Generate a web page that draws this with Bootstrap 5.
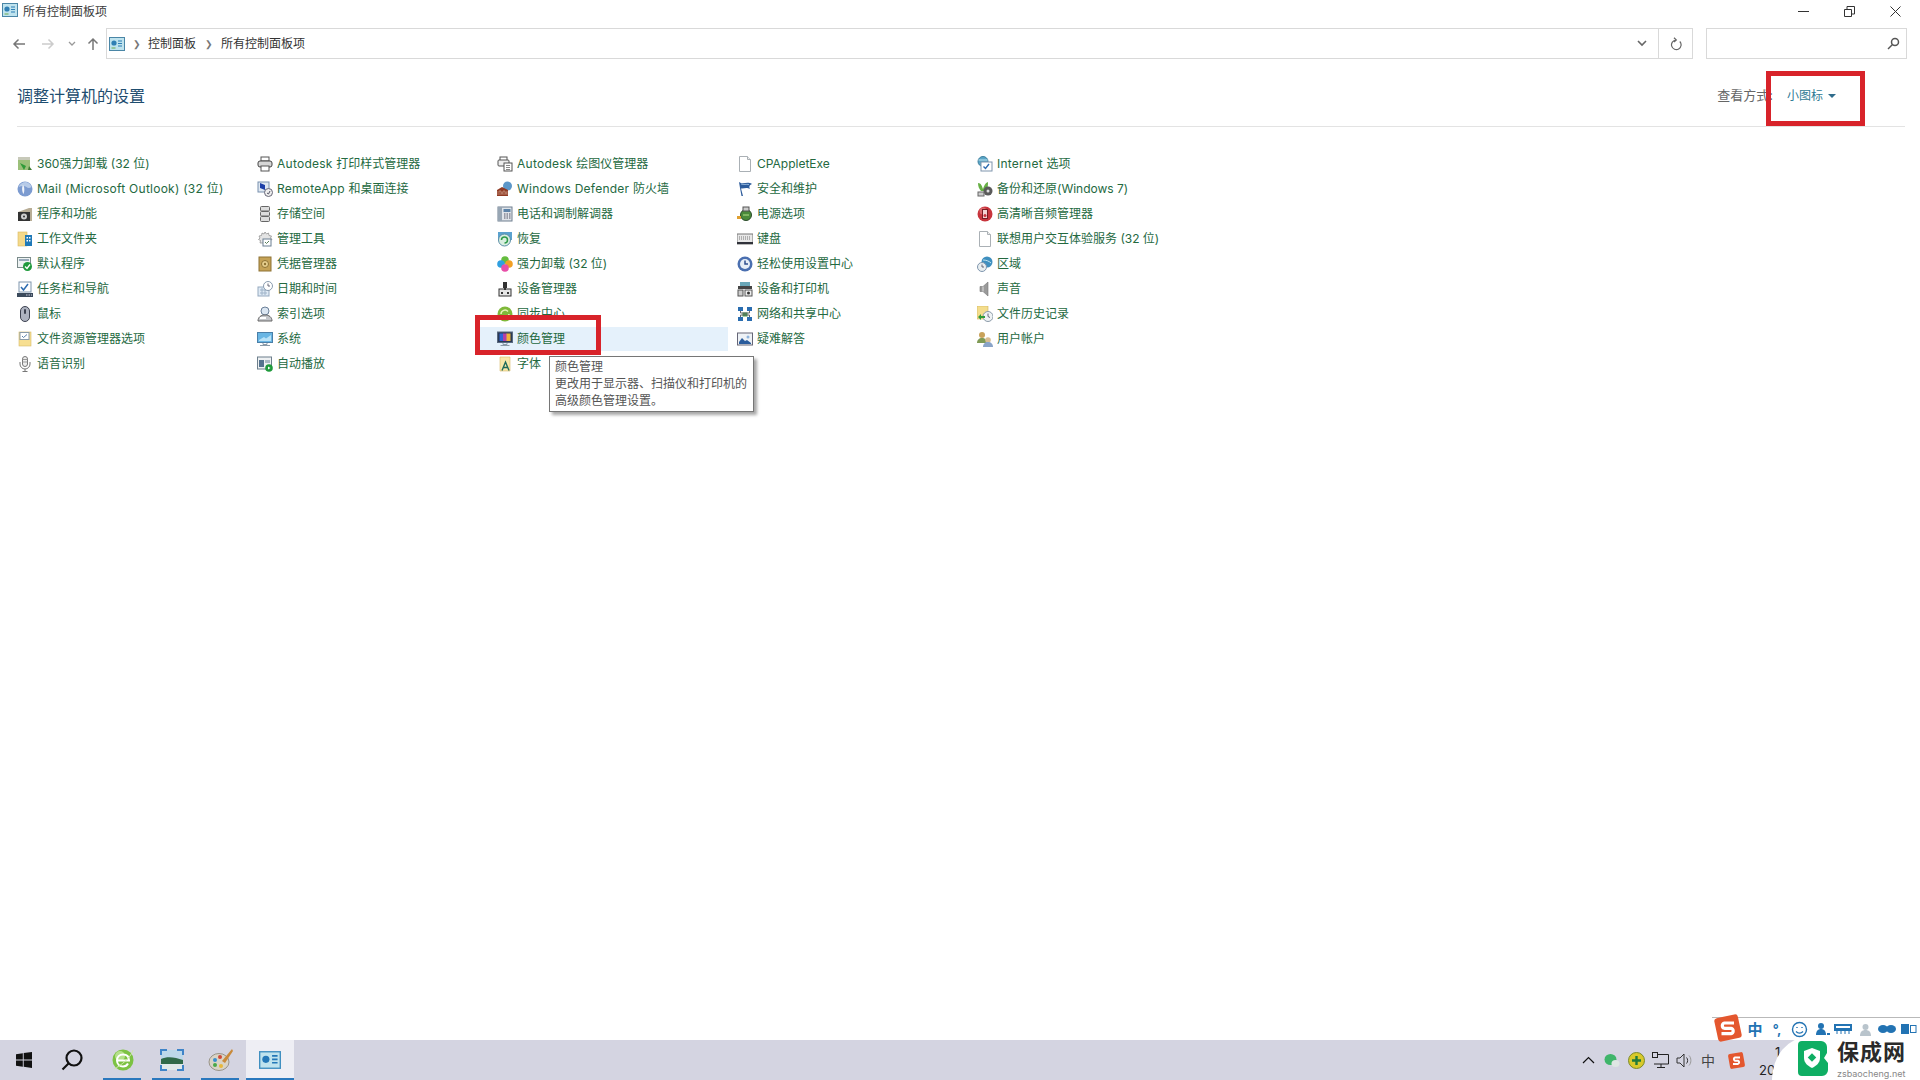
<!DOCTYPE html>
<html lang="zh-CN">
<head>
    <meta charset="UTF-8">
    <meta name="viewport" content="width=device-width, initial-scale=1.0">
    <title>所有控制面板项</title>
    <link href="https://cdn.jsdelivr.net/npm/bootstrap@5.3.3/dist/css/bootstrap.min.css" rel="stylesheet">
    <style>
        html, body { height: 100%; overflow: hidden; }
        body {
            background: #fff;
            font-family: "Inter", "Noto Sans CJK SC", sans-serif;
            font-size: 12px;
            color: #333;
        }
        .win-app { height: 1080px; position: relative; }
        .title-bar { height: 28px; padding-left: 2px; color: #3c3c3c; }
        .title-bar .title-text { margin-left: 5px; line-height: 23px; }
        .title-ico { margin-top: 2px; }
        .win-btn { width: 46px; height: 22px; }
        .win-btns { padding-right: 2px; }
        .addr-row { height: 31px; }
        .nav-btns { width: 106px; padding-left: 5px; }
        .nav-cell { height: 31px; }
        .nav-back { width: 28px; }
        .nav-fwd { width: 30px; }
        .nav-drop { width: 18px; }
        .nav-up { width: 24px; }
        .addr-box {
            width: 1587px;
            border: 1px solid #d9d9d9;
            color: #333;
            padding-left: 2px;
        }
        .addr-sep { width: 23px; color: #777; text-align: center; font-size: 9px; }
        .addr-sep.is-last { width: 25px; }
        .addr-end { width: 34px; border-left: 1px solid #d9d9d9; height: 100%; }
        .addr-drop { width: 32px; }
        .search-box {
            width: 201px;
            margin-left: 13px;
            border: 1px solid #d9d9d9;
            padding-right: 6px;
        }
        .head-row {
            height: 68px;
            margin: 0 15px 0 17px;
            border-bottom: 1px solid #e3e3e3;
        }
        .head-title { font-size: 16px; color: #1e4d6f; line-height: 1; margin-top: 29px; }
        .view-by { color: #666; font-size: 13px; line-height: 1; margin-top: 30px; margin-right: 69px; }
        .view-by .view-val { color: #2f7a94; font-size: 12px; margin-left: 14px; }
        .view-caret {
            display: inline-block;
            border-left: 4px solid transparent;
            border-right: 4px solid transparent;
            border-top: 4px solid #2f6c8c;
            margin-left: 5px;
            vertical-align: 2px;
        }
        .item-grid {
            display: grid;
            grid-auto-flow: column;
            grid-template-rows: repeat(9, 25px);
            grid-auto-columns: 240px;
            margin-top: 25px;
            padding-left: 8px;
        }
        .cp-item {
            display: flex;
            align-items: center;
            padding-left: 9px;
            gap: 4px;
            color: #24693f;
            white-space: nowrap;
            height: 24px;
            width: 240px;
        }
        .cp-item svg { flex: none; width: 16px; height: 16px; }
        .cp-item.is-hover { background: #e5f1fb; margin-left: -8px; padding-left: 17px; width: 248px; }
        .wide-latin { letter-spacing: .25px; }
        .red-mark { position: absolute; border: 5px solid #d8232a; }
        .mark-view { left: 1766px; top: 71px; width: 99px; height: 55px; }
        .mark-color { left: 475px; top: 315px; width: 126px; height: 40px; }
        .tip-box {
            position: absolute;
            left: 549px;
            top: 356px;
            width: 205px;
            height: 56px;
            background: #fff;
            border: 1px solid #767676;
            box-shadow: 3px 3px 3px rgba(0, 0, 0, .35);
            padding: 1px 5px;
            line-height: 17px;
            color: #555;
        }
        .task-bar {
            position: absolute;
            left: 0;
            right: 0;
            bottom: 0;
            height: 40px;
            background: #d4d4e1;
        }
        .task-cell { width: 48px; height: 40px; }
        .task-pin { width: 49px; height: 40px; position: relative; }
        .task-pin::after {
            content: "";
            position: absolute;
            left: 5px;
            right: 6px;
            bottom: 0;
            height: 2px;
            background: #2a78bd;
        }
        .task-pin.is-first { margin-left: 2px; }
        .task-pin.is-active { background: #eeeef4; width: 48px; margin-left: 1px; }
        .task-pin.is-active::after { left: 0; right: 0; }
        .tray-cell { width: 24px; height: 40px; }
        .tray-zh { color: #444; font-size: 14px; }
        .tray-clock { width: 164px; padding-left: 3px; font-size: 13px; line-height: 18px; color: #222; padding-top: 3px; }
        .tray-clock .clock-top { padding-left: 16px; }
        .ime-bar {
            position: absolute;
            left: 1712px;
            top: 1017px;
            width: 208px;
            height: 23px;
            background: #fff;
            border-top: 1px solid #b9b9b9;
            padding-left: 32px;
        }
        .ime-slot { width: 22px; flex: none; }
        .ime-logo { position: absolute; left: 1714px; top: 1014px; }
        .ime-zh { font-size: 15px; font-weight: 700; color: #2273b3; line-height: 1; }
        .ime-dots { color: #2273b3; font-size: 13px; font-weight: 700; line-height: 1; }
        .brand-mark {
            position: absolute;
            left: 1772px;
            top: 1037px;
            width: 148px;
            height: 43px;
            background: #fff;
            border-top-left-radius: 36px 43px;
            padding-left: 26px;
            gap: 8px;
        }
        .brand-name { font-size: 22px; font-weight: 700; color: #2a2a2a; line-height: 31px; letter-spacing: 1px; }
        .brand-url { font-size: 9px; color: #888; line-height: 12px; }
    </style>
</head>
<body>

<!-- icon sprites, 16x16 -->
<svg width="0" height="0" class="position-absolute">
    <symbol id="i-cpl" viewBox="0 0 16 16"><rect x=".5" y="1.500" width="15" height="13" fill="#bfe3ee" stroke="#4a86a6"/><circle cx="5" cy="7" r="2.600" fill="#2f7fb4"/><path d="M9 5h4M9 7.500h4M9 10h4" stroke="#2f7fb4" stroke-width="1.200"/><path d="M2.500 12h4" stroke="#6aa84f"/></symbol>
    <symbol id="i-360" viewBox="0 0 16 16"><rect x="1" y="1" width="12" height="13" fill="#9cc07a"/><rect x="1" y="1" width="12" height="3" fill="#c7c9b9"/><path d="M3 7l6 3-2 4z" fill="#2f9a38"/><path d="M12 10l3 4h-4z" fill="#3f7d33"/></symbol>
    <symbol id="i-mail" viewBox="0 0 16 16"><circle cx="8" cy="8" r="7.500" fill="#7c9bd0"/><path d="M1.500 6C3 2.500 6 1 9 1c3 .5 5 3 5.500 5-2 1.500-4 1-5 0-2-1.500-5-1-8 0z" fill="#b7cbe8"/><path d="M6 4c1.500 1.500 1.800 6 .5 9-1.500-2-2-6.500-.5-9z" fill="#f2f5fa"/></symbol>
    <symbol id="i-prog" viewBox="0 0 16 16"><path d="M1 6l11-4h3v13H1z" fill="#b8ad96"/><rect x="1" y="6" width="12" height="9" fill="#333"/><circle cx="7" cy="10.500" r="3" fill="#cfcfcf"/><circle cx="7" cy="10.500" r="1" fill="#333"/></symbol>
    <symbol id="i-work" viewBox="0 0 16 16"><rect x="1" y="1" width="9" height="14" fill="#f4d98a" stroke="#d9b85e" stroke-width=".6"/><rect x="8" y="4" width="7" height="11" fill="#1f79b8"/><path d="M9.500 6h1.500v1.500H9.500zM12 6h1.500v1.500H12zM9.500 9h1.500v1.500H9.500zM12 9h1.500v1.500H12z" fill="#fff"/></symbol>
    <symbol id="i-def" viewBox="0 0 16 16"><rect x=".5" y="1.500" width="13" height="10" fill="#eef3f3" stroke="#7a8a8a"/><rect x="2" y="3" width="10" height="2" fill="#9ab"/><circle cx="10.500" cy="10.500" r="4.500" fill="#1f9a3c"/><path d="M8 10.500l2 2 3-4" fill="none" stroke="#fff" stroke-width="1.300"/></symbol>
    <symbol id="i-task" viewBox="0 0 16 16"><rect x="2" y="1" width="12" height="10" fill="#fff" stroke="#7f95ad"/><path d="M4 6l2.500 3L11 3" fill="none" stroke="#2d6cb0" stroke-width="1.500"/><rect y="12" width="16" height="4" fill="#3b4a5c"/><path d="M9 14h1.500M11.500 14H13M14 14h1" stroke="#ccd" /></symbol>
    <symbol id="i-mouse" viewBox="0 0 16 16"><rect x="3.500" y=".5" width="9" height="15" rx="4.500" fill="#aeb3c0" stroke="#3d4250"/><rect x="7" y="3" width="2" height="5" rx="1" fill="#3d4250"/></symbol>
    <symbol id="i-fopt" viewBox="0 0 16 16"><rect x="2" y="1" width="12" height="14" fill="#f7df92" stroke="#d6bb68" stroke-width=".6"/><rect x="3" y="1.500" width="9" height="7" fill="#fff" stroke="#8a9aa8"/><path d="M5 5l1.500 1.500L10 3.500" fill="none" stroke="#5a7fa8"/></symbol>
    <symbol id="i-mic" viewBox="0 0 16 16"><rect x="5.500" y=".5" width="5" height="10" rx="2.500" fill="#eee" stroke="#777"/><path d="M5.500 3.500h5M5.500 6h5" stroke="#999"/><path d="M3 6v2a5 5 0 0 0 10 0V6M8 13v2.500M5.500 15.500h5" fill="none" stroke="#777"/></symbol>

    <symbol id="i-print" viewBox="0 0 16 16"><rect x="4" y="1" width="8" height="4" fill="#fff" stroke="#555"/><rect x="1" y="5" width="14" height="6" rx="2" fill="#d6d6d6" stroke="#444"/><rect x="4" y="10" width="8" height="5" fill="#fff" stroke="#555"/></symbol>
    <symbol id="i-remote" viewBox="0 0 16 16"><rect x="1" y="1" width="11" height="10" fill="#dfe8f2" stroke="#7890ad"/><path d="M3 2l5 2v5l-5-2z" fill="#1d3fa8"/><circle cx="11.500" cy="11.500" r="4" fill="#eee" stroke="#667"/><path d="M10 12l1.500 1 1.500-3" fill="none" stroke="#556"/></symbol>
    <symbol id="i-store" viewBox="0 0 16 16"><g fill="#ddd" stroke="#666"><rect x="3.500" y=".5" width="9" height="4.500" rx="1"/><rect x="3.500" y="5.500" width="9" height="4.500" rx="1"/><rect x="3.500" y="10.500" width="9" height="5" rx="1"/></g></symbol>
    <symbol id="i-admin" viewBox="0 0 16 16"><path d="M8 1l1.500 2 2-1 .5 2.500 2.500.5-1 2 1.500 1.500-2 1 .5 2.500H3l.5-2.500-2-1L3 7 2 5l2.500-.5L5 2l2 1z" fill="#e4e4e4" stroke="#888" stroke-width=".7"/><rect x="6" y="8" width="8" height="7" fill="#fff" stroke="#6b7f92"/><path d="M8 11l1.500 1.500L12 10" fill="none" stroke="#5a7f5a"/></symbol>
    <symbol id="i-cred" viewBox="0 0 16 16"><rect x="2" y="1" width="12" height="14" fill="#c5a256" stroke="#8e7334"/><circle cx="8" cy="8" r="3.500" fill="#e7cf8e" stroke="#8e7334"/><circle cx="8" cy="8" r="1.200" fill="#8e7334"/></symbol>
    <symbol id="i-date" viewBox="0 0 16 16"><rect x="1" y="6" width="11" height="9" fill="#dfeaf5" stroke="#95a9bf"/><path d="M3 9h7M3 12h7M5 7v7M8 7v7" stroke="#9fb3c8"/><circle cx="11" cy="5" r="4.500" fill="#fff" stroke="#8a9cb0"/><path d="M11 2.500V5h2" fill="none" stroke="#667"/></symbol>
    <symbol id="i-index" viewBox="0 0 16 16"><circle cx="8" cy="5" r="4" fill="#dbe6f2" stroke="#6a7f98"/><path d="M1 15c0-4 3-6 7-6s7 2 7 6z" fill="#c4c6ca" stroke="#666"/><rect x="3" y="11" width="6" height="2" fill="#fff"/></symbol>
    <symbol id="i-sys" viewBox="0 0 16 16"><rect x=".5" y="1.500" width="15" height="10" fill="#69b6e4" stroke="#4a7fa8"/><path d="M2 9l5-3 2 1.500L14 4v6H2z" fill="#b9e2f7"/><path d="M6 12v1.500h4V12M3 14.500h10" stroke="#8a9aa8" fill="none"/></symbol>
    <symbol id="i-auto" viewBox="0 0 16 16"><rect x=".5" y="1" width="14" height="12" fill="#eef1f3" stroke="#6d7f8c"/><rect x="2" y="4" width="5" height="7" fill="#54728e"/><rect x="8" y="4" width="5" height="3" fill="#aab8c4"/><circle cx="12" cy="12" r="3.800" fill="#1f9a3c"/><path d="M11 10.500l2.500 1.500-2.500 1.500z" fill="#fff"/></symbol>

    <symbol id="i-plot" viewBox="0 0 16 16"><rect x="3" y="1" width="7" height="4" fill="#fff" stroke="#555"/><rect x="1" y="4" width="11" height="6" rx="1" fill="#eee" stroke="#555"/><rect x="7" y="7" width="8" height="8" fill="#fff" stroke="#555"/><path d="M9 9.500h4M9 11.500h4M9 13.500h4" stroke="#888"/></symbol>
    <symbol id="i-fire" viewBox="0 0 16 16"><circle cx="10.500" cy="5" r="4.500" fill="#5c97c9"/><path d="M0 15V9l5-3 6 3v6z" fill="#8f3a23"/><path d="M0 11h11M0 13h11M3 9v2M7 9v2M5 11v2M9 11v2" stroke="#d8b2a0" stroke-width=".6"/></symbol>
    <symbol id="i-phone" viewBox="0 0 16 16"><rect x="1" y="1" width="14" height="14" fill="#dfe4ea" stroke="#6f7f8f"/><rect x="1" y="1" width="4" height="14" fill="#98a6b4"/><rect x="6.500" y="3" width="7" height="3" fill="#5d83a8"/><path d="M7 8h1.500M9.500 8H11M12 8h1.500M7 10h1.500M9.500 10H11M12 10h1.500M7 12h1.500M9.500 12H11M12 12h1.500" stroke="#556"/></symbol>
    <symbol id="i-recover" viewBox="0 0 16 16"><rect x="1" y="1" width="14" height="8" fill="#5ba2cf"/><circle cx="7.500" cy="9" r="6" fill="#d9efe0" stroke="#5b8ea8"/><path d="M4.500 9a3 3 0 1 1 3 3" fill="none" stroke="#2f9a4a" stroke-width="1.500"/></symbol>
    <symbol id="i-flower" viewBox="0 0 16 16"><circle cx="8" cy="4" r="3.800" fill="#65bd3f"/><circle cx="4" cy="8" r="3.800" fill="#2f9fe0"/><circle cx="12" cy="8" r="3.800" fill="#f2a024"/><circle cx="8" cy="12" r="3.800" fill="#e84fa8"/></symbol>
    <symbol id="i-dev" viewBox="0 0 16 16"><rect x="6" y="1" width="4" height="6" fill="#333"/><rect x="2" y="8" width="12" height="7" fill="#e6e6e6" stroke="#333"/><rect x="7" y="6" width="2" height="3" fill="#333"/><rect x="4" y="11" width="2" height="2" fill="#333"/><rect x="10" y="11" width="2" height="2" fill="#333"/></symbol>
    <symbol id="i-sync" viewBox="0 0 16 16"><circle cx="8" cy="8" r="7.500" fill="#7fb93a"/><path d="M4 8a4 4 0 0 1 7-2.500M12 8a4 4 0 0 1-7 2.500" fill="none" stroke="#e9f3b8" stroke-width="1.500"/></symbol>
    <symbol id="i-color" viewBox="0 0 16 16"><rect x=".5" y="1" width="15" height="10.500" fill="#2b3a55" stroke="#5a6a80"/><rect x="2.500" y="2.500" width="4" height="7.500" fill="#2f65d8"/><rect x="6" y="2.500" width="4" height="7.500" fill="#b33fa8"/><rect x="9.500" y="2.500" width="4" height="7.500" fill="#f0b33a"/><path d="M6 12v1.500h4V12M3.500 14.500h9" stroke="#8a9aa8" fill="none"/></symbol>
    <symbol id="i-font" viewBox="0 0 16 16"><path d="M3 1h10v14H3z" fill="#f9e7a8" stroke="#d6bb68" stroke-width=".6"/><path d="M5 14.500L8.500 6l3.500 8.500M6.300 11.500h4.400" fill="none" stroke="#1f6a5a" stroke-width="1.400"/></symbol>

    <symbol id="i-file" viewBox="0 0 16 16"><path d="M2.500.5h8l3 3v12h-11z" fill="#fff" stroke="#aab0b5"/><path d="M10.500.5v3h3" fill="#eee" stroke="#aab0b5"/></symbol>
    <symbol id="i-flag" viewBox="0 0 16 16"><path d="M2 1c4 3 8-1 13 2-3 1-3 3-2 5-4-2-6 0-9-.5L6 15H4.500L3 7z" fill="#2d5c9c"/><path d="M4 3c3 1 5 0 8 .5" fill="none" stroke="#8fb4dc"/></symbol>
    <symbol id="i-power" viewBox="0 0 16 16"><circle cx="9" cy="9" r="5.500" fill="#4a8a3a" stroke="#2a4a2a"/><rect x="6" y="1" width="6" height="4" fill="#ccc" stroke="#555"/><path d="M0 10h4v3H0z" fill="#e0a030"/><path d="M6 9h6" stroke="#b5e08a"/></symbol>
    <symbol id="i-keys" viewBox="0 0 16 16"><rect y="3" width="16" height="10" fill="#e8e8e8" stroke="#777"/><path d="M2 6h12M2 8h12" stroke="#777" stroke-dasharray="1 1"/><rect y="11" width="16" height="2" fill="#30323a"/></symbol>
    <symbol id="i-ease" viewBox="0 0 16 16"><circle cx="8" cy="8" r="7.500" fill="#4a6fb0"/><circle cx="8" cy="8" r="5" fill="#e8eef7"/><path d="M8 4.500V8h3" fill="none" stroke="#2f4f90" stroke-width="1.500"/></symbol>
    <symbol id="i-devprn" viewBox="0 0 16 16"><rect x="3" y="1" width="10" height="4" fill="#6aa7b8"/><rect x="1" y="5" width="14" height="3" fill="#444"/><rect x="1" y="9" width="5" height="6" fill="#ccc" stroke="#555"/><rect x="8" y="9" width="7" height="6" fill="#eee" stroke="#555"/><circle cx="11.500" cy="12" r="1.500" fill="#333"/></symbol>
    <symbol id="i-net" viewBox="0 0 16 16"><rect x="1" y="1" width="5" height="4" fill="#2a6db0"/><rect x="10" y="1" width="5" height="4" fill="#2a6db0"/><rect x="5.500" y="6.500" width="5" height="4" fill="#3f9a4a"/><rect x="1" y="11" width="5" height="4" fill="#2a6db0"/><rect x="10" y="11" width="5" height="4" fill="#2a6db0"/><path d="M3.500 5v2h9V5M3.500 11V9h9v2" fill="none" stroke="#666"/></symbol>
    <symbol id="i-trouble" viewBox="0 0 16 16"><rect x=".5" y="2" width="15" height="12" fill="#eef2f6" stroke="#667"/><path d="M2 11l3-4 3 3 2-1 4 3v1H2z" fill="#2a5c9c"/><circle cx="11" cy="6" r="1.500" fill="#8fb4dc"/></symbol>

    <symbol id="i-inet" viewBox="0 0 16 16"><circle cx="6" cy="5.500" r="5" fill="#5aa6c7" stroke="#3f7f9e"/><path d="M1.500 4h9" stroke="#bfe3ee"/><rect x="4" y="6" width="11" height="9" fill="#fff" stroke="#7f95ad"/><path d="M6.500 10.500l2 2L12 8" fill="none" stroke="#2d6cb0" stroke-width="1.400"/></symbol>
    <symbol id="i-backup" viewBox="0 0 16 16"><path d="M1 2c3 0 4 3 5 6 1-3 2-6 5-7 0 3 0 6-2 9H4C2 8 1 5 1 2z" fill="#67b045"/><circle cx="11" cy="10" r="4.500" fill="#5a5a5a"/><circle cx="11" cy="10" r="1.500" fill="#ddd"/><rect x="1" y="11" width="6" height="4" fill="#ccc" stroke="#666"/></symbol>
    <symbol id="i-audio" viewBox="0 0 16 16"><circle cx="8" cy="8" r="7.500" fill="#c8343c"/><circle cx="6" cy="5" r="3.500" fill="#e98a8a" opacity=".6"/><rect x="5.500" y="3.500" width="5" height="9" fill="#f4d2d2" stroke="#7a1c22"/><circle cx="8" cy="9.500" r="1.500" fill="#c8343c"/></symbol>
    <symbol id="i-region" viewBox="0 0 16 16"><circle cx="10" cy="6" r="5.500" fill="#3f8fbf"/><path d="M6 4c3 0 6 1 8 3" stroke="#bfe3ee" fill="none"/><circle cx="5" cy="11" r="4.500" fill="#e8eef0" stroke="#7f95ad"/><path d="M5 8.500V11h2" fill="none" stroke="#667"/></symbol>
    <symbol id="i-sound" viewBox="0 0 16 16"><path d="M3 5.500h3L11 1v14L6 10.500H3z" fill="#9a9a9a" stroke="#777" stroke-width=".6"/><path d="M6 5.500v5" stroke="#ddd"/></symbol>
    <symbol id="i-hist" viewBox="0 0 16 16"><rect x="0" y="0" width="11" height="13" fill="#f4dd8c" stroke="#cdb35f" stroke-width=".6"/><circle cx="11" cy="10.500" r="5" fill="#eef2f4" stroke="#8a9aa8"/><path d="M11 7.500v3l2 1" fill="none" stroke="#667"/><path d="M1 11l3-3v2h4v2H4v2z" fill="#2f9a38"/></symbol>
    <symbol id="i-users" viewBox="0 0 16 16"><circle cx="5" cy="4" r="3" fill="#c9a25a"/><path d="M0 12c0-3 2-5 5-5s5 2 5 5z" fill="#7f9a55"/><circle cx="11" cy="9" r="2.800" fill="#d9bd92"/><path d="M6 16c0-3 2-5 5-5s5 2 5 5z" fill="#8aa4c8"/></symbol>
</svg>

<div class="win-app d-flex flex-column">

    <div class="title-bar d-flex">
        <svg class="title-ico" width="16" height="16"><use href="#i-cpl"/></svg>
        <span class="title-text">所有控制面板项</span>
        <div class="win-btns d-flex ms-auto">
            <div class="win-btn d-flex align-items-center justify-content-center">
                <svg width="11" height="11"><path d="M0 5.500h11" stroke="#333"/></svg>
            </div>
            <div class="win-btn d-flex align-items-center justify-content-center">
                <svg width="11" height="11" fill="none" stroke="#333"><path d="M.5 3.500h7v7h-7zM3 3.500V.5h7.500V8H8"/></svg>
            </div>
            <div class="win-btn d-flex align-items-center justify-content-center">
                <svg width="11" height="11" stroke="#333"><path d="M.5.5l10 10M10.500.5l-10 10"/></svg>
            </div>
        </div>
    </div>

    <div class="addr-row d-flex">
        <div class="nav-btns d-flex">
            <div class="nav-cell nav-back d-flex align-items-center justify-content-center">
                <svg width="14" height="12" fill="none" stroke="#777" stroke-width="1.500"><path d="M13 6H2M6.500 1.500L2 6l4.500 4.500"/></svg>
            </div>
            <div class="nav-cell nav-fwd d-flex align-items-center justify-content-center">
                <svg width="14" height="12" fill="none" stroke="#ccc" stroke-width="1.500"><path d="M1 6h11M7.500 1.500L12 6l-4.500 4.500"/></svg>
            </div>
            <div class="nav-cell nav-drop d-flex align-items-center justify-content-center">
                <svg width="8" height="6" fill="none" stroke="#999" stroke-width="1.300"><path d="M1 1l3 3 3-3"/></svg>
            </div>
            <div class="nav-cell nav-up d-flex align-items-center justify-content-center">
                <svg width="12" height="14" fill="none" stroke="#777" stroke-width="1.500"><path d="M6 13V2M1.500 6.500L6 2l4.500 4.500"/></svg>
            </div>
        </div>
        <div class="addr-box d-flex align-items-center">
            <svg width="16" height="16"><use href="#i-cpl"/></svg>
            <span class="addr-sep">&#10095;</span>
            <span>控制面板</span>
            <span class="addr-sep is-last">&#10095;</span>
            <span>所有控制面板项</span>
            <div class="addr-drop d-flex justify-content-center ms-auto">
                <svg width="10" height="7" fill="none" stroke="#666" stroke-width="1.600"><path d="M1 1l4 4 4-4"/></svg>
            </div>
            <div class="addr-end d-flex align-items-center justify-content-center">
                <svg width="12" height="14" fill="none" stroke="#666" stroke-width="1.200"><path d="M9.800 4.500A4.800 4.800 0 1 1 6 3M4 .8L6.300 3 4 5"/></svg>
            </div>
        </div>
        <div class="search-box d-flex align-items-center justify-content-end">
            <svg width="13" height="13" fill="none" stroke="#555" stroke-width="1.500"><circle cx="8" cy="5" r="3.500"/><path d="M5.500 7.500L1 12"/></svg>
        </div>
    </div>

    <div class="head-row d-flex justify-content-between">
        <div class="head-title">调整计算机的设置</div>
        <div class="view-by">查看方式:<span class="view-val">小图标<span class="view-caret"></span></span></div>
    </div>

    <div class="item-grid">
        <div class="cp-item"><svg><use href="#i-360"/></svg>360强力卸载 (32 位)</div>
        <div class="cp-item"><svg><use href="#i-mail"/></svg><span class="wide-latin">Mail (Microsoft Outlook) (32 位)</span></div>
        <div class="cp-item"><svg><use href="#i-prog"/></svg>程序和功能</div>
        <div class="cp-item"><svg><use href="#i-work"/></svg>工作文件夹</div>
        <div class="cp-item"><svg><use href="#i-def"/></svg>默认程序</div>
        <div class="cp-item"><svg><use href="#i-task"/></svg>任务栏和导航</div>
        <div class="cp-item"><svg><use href="#i-mouse"/></svg>鼠标</div>
        <div class="cp-item"><svg><use href="#i-fopt"/></svg>文件资源管理器选项</div>
        <div class="cp-item"><svg><use href="#i-mic"/></svg>语音识别</div>

        <div class="cp-item"><svg><use href="#i-print"/></svg><span><span class="wide-latin">Autodesk </span>打印样式管理器</span></div>
        <div class="cp-item"><svg><use href="#i-remote"/></svg><span><span class="wide-latin">RemoteApp </span>和桌面连接</span></div>
        <div class="cp-item"><svg><use href="#i-store"/></svg>存储空间</div>
        <div class="cp-item"><svg><use href="#i-admin"/></svg>管理工具</div>
        <div class="cp-item"><svg><use href="#i-cred"/></svg>凭据管理器</div>
        <div class="cp-item"><svg><use href="#i-date"/></svg>日期和时间</div>
        <div class="cp-item"><svg><use href="#i-index"/></svg>索引选项</div>
        <div class="cp-item"><svg><use href="#i-sys"/></svg>系统</div>
        <div class="cp-item"><svg><use href="#i-auto"/></svg>自动播放</div>

        <div class="cp-item"><svg><use href="#i-plot"/></svg><span><span class="wide-latin">Autodesk </span>绘图仪管理器</span></div>
        <div class="cp-item"><svg><use href="#i-fire"/></svg><span><span class="wide-latin">Windows Defender </span>防火墙</span></div>
        <div class="cp-item"><svg><use href="#i-phone"/></svg>电话和调制解调器</div>
        <div class="cp-item"><svg><use href="#i-recover"/></svg>恢复</div>
        <div class="cp-item"><svg><use href="#i-flower"/></svg>强力卸载 (32 位)</div>
        <div class="cp-item"><svg><use href="#i-dev"/></svg>设备管理器</div>
        <div class="cp-item"><svg><use href="#i-sync"/></svg>同步中心</div>
        <div class="cp-item is-hover"><svg><use href="#i-color"/></svg>颜色管理</div>
        <div class="cp-item"><svg><use href="#i-font"/></svg>字体</div>

        <div class="cp-item"><svg><use href="#i-file"/></svg>CPAppletExe</div>
        <div class="cp-item"><svg><use href="#i-flag"/></svg>安全和维护</div>
        <div class="cp-item"><svg><use href="#i-power"/></svg>电源选项</div>
        <div class="cp-item"><svg><use href="#i-keys"/></svg>键盘</div>
        <div class="cp-item"><svg><use href="#i-ease"/></svg>轻松使用设置中心</div>
        <div class="cp-item"><svg><use href="#i-devprn"/></svg>设备和打印机</div>
        <div class="cp-item"><svg><use href="#i-net"/></svg>网络和共享中心</div>
        <div class="cp-item"><svg><use href="#i-trouble"/></svg>疑难解答</div>
        <div></div>

        <div class="cp-item"><svg><use href="#i-inet"/></svg><span><span class="wide-latin">Internet </span>选项</span></div>
        <div class="cp-item"><svg><use href="#i-backup"/></svg>备份和还原(Windows 7)</div>
        <div class="cp-item"><svg><use href="#i-audio"/></svg>高清晰音频管理器</div>
        <div class="cp-item"><svg><use href="#i-file"/></svg>联想用户交互体验服务 (32 位)</div>
        <div class="cp-item"><svg><use href="#i-region"/></svg>区域</div>
        <div class="cp-item"><svg><use href="#i-sound"/></svg>声音</div>
        <div class="cp-item"><svg><use href="#i-hist"/></svg>文件历史记录</div>
        <div class="cp-item"><svg><use href="#i-users"/></svg>用户帐户</div>
    </div>

    <!-- annotations and tooltip on top of the window -->
    <div class="red-mark mark-view"></div>
    <div class="red-mark mark-color"></div>
    <div class="tip-box">颜色管理<br>更改用于显示器、扫描仪和打印机的<br>高级颜色管理设置。</div>

    <div class="task-bar d-flex">
        <div class="task-cell d-flex align-items-center justify-content-center">
            <svg width="16" height="16" fill="#111"><path d="M0 2.200l6.800-1V7.500H0zM7.700 1.100L16 0v7.500H7.700zM0 8.400h6.800v6.400l-6.800-1zM7.700 8.400H16V16l-8.300-1.200z"/></svg>
        </div>
        <div class="task-cell d-flex align-items-center justify-content-center">
            <svg width="22" height="22" fill="none" stroke="#111" stroke-width="2.200"><circle cx="13" cy="9" r="7.500"/><path d="M7.500 14.500L1.500 20.500"/></svg>
        </div>
        <div class="task-pin is-first d-flex align-items-center justify-content-center">
            <svg width="24" height="24" viewBox="0 0 24 24"><circle cx="12" cy="12" r="10.500" fill="#7cc243"/><circle cx="9" cy="8" r="5" fill="#b5e08a"/><path d="M6 12.500h12c0-4-2.500-6-6-6s-6 2.500-6 6c0 4 3 6 6 6 2 0 4-1 5-3" fill="none" stroke="#fff" stroke-width="2"/><path d="M3 21C9 18 20 10 22 2" fill="none" stroke="#cfe8a8"/></svg>
        </div>
        <div class="task-pin d-flex align-items-center justify-content-center">
            <svg width="24" height="22" viewBox="0 0 24 22"><rect x="1" y="1" width="22" height="20" fill="#bcd8ea"/><path d="M1 10c6-3 14-2 22 1v6H1z" fill="#2f6a4a"/><path d="M1 15h22v6H1z" fill="#dfe9ea"/><path d="M1 6V1h6M17 1h6v5M1 16v5h6M17 21h6v-5" fill="none" stroke="#3f84c8" stroke-width="2"/></svg>
        </div>
        <div class="task-pin d-flex align-items-center justify-content-center">
            <svg width="26" height="24" viewBox="0 0 26 24"><ellipse cx="11" cy="14" rx="10" ry="8.500" fill="#d9d4c6" stroke="#9a9488"/><circle cx="7" cy="12" r="2" fill="#3a8fd0"/><circle cx="12" cy="9" r="2" fill="#d04a3a"/><circle cx="7" cy="17" r="2" fill="#4aa84a"/><circle cx="13" cy="18" r="2" fill="#e8b83a"/><path d="M14 13L24 1l1 2-8 12z" fill="#c98a3a"/></svg>
        </div>
        <div class="task-pin is-active d-flex align-items-center justify-content-center">
            <svg width="22" height="18" viewBox="0 0 16 13"><rect x=".5" y=".5" width="15" height="12" fill="#bfe3ee" stroke="#3f8fc0"/><circle cx="5" cy="6" r="2.600" fill="#2478b8"/><path d="M9.500 3.500h4M9.500 6h4M9.500 8.500h4" stroke="#2478b8" stroke-width="1.200"/></svg>
        </div>

        <div class="d-flex ms-auto">
            <div class="tray-cell d-flex align-items-center justify-content-center">
                <svg width="13" height="8" fill="none" stroke="#111" stroke-width="1.200"><path d="M1 7l5.500-5.500L12 7"/></svg>
            </div>
            <div class="tray-cell d-flex align-items-center justify-content-center">
                <svg width="16" height="15" viewBox="0 0 16 15"><ellipse cx="6.500" cy="6.500" rx="6" ry="5.500" fill="#3fb56a"/><ellipse cx="11.500" cy="10.500" rx="4" ry="3.500" fill="#dfe6e3"/></svg>
            </div>
            <div class="tray-cell d-flex align-items-center justify-content-center">
                <svg width="17" height="17" viewBox="0 0 17 17"><circle cx="8.500" cy="8.500" r="8" fill="#d8c92a" stroke="#7a8a2a"/><path d="M8.500 4v9M4 8.500h9" stroke="#1f7a3a" stroke-width="2.400"/></svg>
            </div>
            <div class="tray-cell d-flex align-items-center justify-content-center">
                <svg width="17" height="16" fill="none" stroke="#222"><path d="M5.500 2.500H16.500V12H2M9 12v3.500M5 15.500h8"/><rect x=".5" y=".5" width="5" height="5" fill="#d4d4e1"/></svg>
            </div>
            <div class="tray-cell d-flex align-items-center justify-content-center">
                <svg width="17" height="15" fill="none" stroke="#333"><path d="M1 5h3l4-4v13L4 10H1zM10.500 4.500c1.500 1.500 1.500 4.500 0 6"/><path d="M13 2.500c2.500 2.500 2.500 7.500 0 10" stroke="#999"/></svg>
            </div>
            <div class="tray-cell tray-zh d-flex align-items-center justify-content-center">中</div>
            <div class="tray-cell d-flex align-items-center justify-content-center ms-1">
                <svg width="17" height="17" viewBox="0 0 17 17"><rect x="1" y="1" width="15" height="15" rx="2" fill="#e4572e" transform="rotate(-10 8.500 8.500)"/><path d="M12 5.500H7a1.700 1.700 0 0 0 0 3.200h3a1.700 1.700 0 0 1 0 3.200H5" fill="none" stroke="#fff" stroke-width="2"/></svg>
            </div>
            <div class="tray-clock ms-2"><div class="clock-top">1</div><div>20</div></div>
        </div>
    </div>

    <!-- sogou input bar, floats over the desktop -->
    <div class="ime-bar d-flex align-items-center">
        <span class="ime-slot ime-zh text-center">中</span>
        <span class="ime-slot ime-dots text-center">°,</span>
        <div class="ime-slot d-flex justify-content-center"><svg width="17" height="17" fill="none" stroke="#2273b3" stroke-width="1.400"><circle cx="8.500" cy="8.500" r="7"/><path d="M5 10.500c2 2 5 2 7 0M6 6v1M11 6v1"/></svg></div>
        <div class="ime-slot d-flex justify-content-center"><svg width="17" height="14" fill="#2273b3"><circle cx="8" cy="4" r="3"/><path d="M3 13c0-4 2-6 5-6s5 2 5 6z"/><rect x="14" y="11" width="3" height="2"/></svg></div>
        <div class="ime-slot d-flex justify-content-center"><svg width="18" height="10" fill="#2273b3"><rect width="18" height="7"/><path d="M3 7v3M7 7v3M11 7v3M15 7v3" stroke="#2273b3"/><rect x="2" y="2" width="14" height="2" fill="#fff"/></svg></div>
        <div class="ime-slot d-flex justify-content-center"><svg width="13" height="13" fill="#b9c4cc"><circle cx="6.500" cy="4" r="3"/><path d="M1 13c0-4 2-6 5.500-6S12 9 12 13z"/></svg></div>
        <div class="ime-slot d-flex justify-content-center"><svg width="18" height="10" fill="#2273b3"><ellipse cx="5" cy="5" rx="5" ry="4"/><ellipse cx="13" cy="5" rx="5" ry="4"/></svg></div>
        <div class="ime-slot d-flex justify-content-center"><svg width="16" height="10"><rect width="8" height="10" fill="#2273b3"/><rect x="9.500" y="1.500" width="5.500" height="7" fill="#fff" stroke="#2273b3"/></svg></div>
    </div>
    <svg class="ime-logo" width="28" height="28" viewBox="0 0 28 28"><rect x="2" y="2" width="24" height="24" rx="3" fill="#e4572e" transform="rotate(-12 14 14)"/><path d="M20 9H10.500a2.700 2.700 0 0 0 0 5.300h6.500a2.700 2.700 0 0 1 0 5.300H7.500" fill="none" stroke="#fff" stroke-width="3.200"/></svg>

    <!-- site watermark in the corner -->
    <div class="brand-mark position-absolute d-flex align-items-center">
        <svg width="31" height="35" viewBox="0 0 31 35"><path d="M0 4a4 4 0 0 1 4-4h19a6 6 0 0 1 6 6v6l-3 5 4 5v7a6 6 0 0 1-6 6H4a4 4 0 0 1-4-4z" fill="#0fae63"/><path d="M14 7l8 3v7c0 5-4 8-8 10-4-2-8-5-8-10v-7z" fill="#fff"/><rect x="11" y="13.500" width="6" height="6" fill="#0fae63" transform="rotate(45 14 16.500)"/></svg>
        <div>
            <div class="brand-name">保成网</div>
            <div class="brand-url">zsbaocheng.net</div>
        </div>
    </div>
</div>

</body>
</html>
